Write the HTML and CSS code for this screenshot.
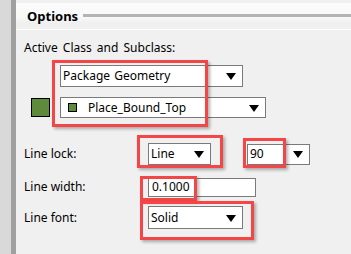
FILE: index.html
```html
<!DOCTYPE html>
<html lang="en">
<head>
    <meta charset="UTF-8">
    <title>Options</title>
    <link rel="stylesheet" href="styles.css">
</head>
<body>
    <div class="frame">
        <div class="strip"></div>
        <div class="bar"></div>
        <div class="panel">
            <div class="head">
                <span class="head-title">Options</span>
                <span class="head-line"></span>
            </div>
            <div class="body">
                <div class="caption">Active Class and Subclass:</div>
                <div class="combo combo-class">
                    <span class="combo-text">Package Geometry</span>
                    <span class="arrow"></span>
                </div>
                <div class="sub-row">
                    <span class="swatch"></span>
                    <div class="combo combo-sub">
                        <span class="mini-swatch"></span>
                        <span class="combo-text">Place_Bound_Top</span>
                        <span class="arrow"></span>
                    </div>
                </div>
                <div class="field-row row-lock">
                    <span class="label">Line lock:</span>
                    <div class="combo combo-lock">
                        <span class="combo-text">Line</span>
                        <span class="arrow"></span>
                    </div>
                    <div class="combo combo-angle">
                        <span class="combo-text">90</span>
                        <span class="arrow"></span>
                    </div>
                </div>
                <div class="field-row row-width">
                    <span class="label">Line width:</span>
                    <div class="edit">0.1000</div>
                </div>
                <div class="field-row row-font">
                    <span class="label">Line font:</span>
                    <div class="combo combo-font">
                        <span class="combo-text">Solid</span>
                        <span class="arrow"></span>
                    </div>
                </div>
            </div>
        </div>

        <div class="mark mark-class"></div>
        <div class="mark mark-lock"></div>
        <div class="mark mark-angle"></div>
        <div class="mark mark-width"></div>
        <div class="mark mark-font"></div>
    </div>
</body>
</html>
```

FILE: styles.css
```css
*{
    padding: 0;
    margin: 0;
    box-sizing: border-box;
}
body{
    background: #f0f0f0;
    font-family: "Noto Sans", "Open Sans", sans-serif;
    font-size: 12px;
    color: #000;
}
.frame{
    position: relative;
    display: flex;
    width: 351px;
    height: 254px;
    overflow: hidden;
}
.strip{
    width: 11px;
    background: #d9d9d9;
}
.bar{
    width: 5px;
    background: #a0a0a0;
}
.panel{
    flex: 1;
    background: #f0f0f0;
}
.head{
    height: 30px;
    padding-top: 3px;
    background: linear-gradient(#fcfcfc 0, #f8f8f8 14px, #f0f0f0 20px, #f0f0f0 100%);
    border-top: 3px solid #f0f0f0;
    border-bottom: 1px solid #ffffff;
    display: flex;
    align-items: flex-start;
}
.head-title{
    font-weight: bold;
    font-size: 13px;
    line-height: 16px;
    margin-left: 11px;
    margin-top: 2px;
    color: #000;
}
.head-line{
    flex: 1;
    height: 3px;
    margin-left: 5px;
    margin-top: 8px;
    background: #b4b4b4;
}
.body{
    padding-left: 8px;
}
.caption{
    margin-top: 10px;
    line-height: 16px;
    word-spacing: 2px;
}
.combo{
    position: relative;
    display: flex;
    align-items: center;
    background: #fff;
    border: 1px solid #7a7a7a;
}
.combo-text{
    padding-left: 2px;
    line-height: 16px;
    white-space: nowrap;
}
.arrow{
    position: absolute;
    right: 6px;
    top: 50%;
    margin-top: -3px;
    width: 0;
    height: 0;
    border-left: 5px solid transparent;
    border-right: 5px solid transparent;
    border-top: 7px solid #000;
}
.combo-class{
    margin-left: 36px;
    margin-top: 9px;
    width: 183px;
    height: 22px;
}
.combo-class .combo-text{
    word-spacing: 1px;
}
.sub-row{
    display: flex;
    align-items: center;
    margin-top: 10px;
    height: 21px;
}
.swatch{
    width: 19px;
    height: 19px;
    margin-left: 7px;
    background: #5e8a3c;
    border: 1px solid #000;
}
.combo-sub{
    margin-left: 10px;
    width: 206px;
    height: 21px;
}
.mini-swatch{
    width: 9px;
    height: 9px;
    margin-left: 7px;
    margin-right: 11px;
    background: #5e8a3c;
    border: 1px solid #000;
}
.combo-sub .combo-text{
    padding-left: 0;
}
.field-row{
    display: flex;
    align-items: center;
}
.label{
    width: 124px;
    line-height: 16px;
}
.row-lock{
    margin-top: 25px;
    height: 22px;
}
.combo-lock{
    width: 63px;
    height: 22px;
}
.combo-angle{
    margin-left: 36px;
    width: 63px;
    height: 21px;
}
.row-width{
    margin-top: 13px;
    height: 18px;
}
.edit{
    width: 108px;
    height: 19px;
    background: #fff;
    border: 1px solid #7a7a7a;
    padding-left: 3px;
    line-height: 16px;
}
.row-font{
    margin-top: 10px;
    height: 23px;
}
.combo-font{
    width: 95px;
    height: 23px;
}
.mark{
    position: absolute;
    border: 3px solid #f44646;
    box-shadow: 2px 2px 3px rgba(0, 0, 0, 0.3);
}
.mark-class{
    left: 52px;
    top: 60px;
    width: 156px;
    height: 67px;
}
.mark-lock{
    left: 137px;
    top: 135px;
    width: 86px;
    height: 33px;
}
.mark-angle{
    left: 243px;
    top: 138px;
    width: 43px;
    height: 30px;
}
.mark-width{
    left: 140px;
    top: 176px;
    width: 57px;
    height: 25px;
}
.mark-font{
    left: 140px;
    top: 201px;
    width: 114px;
    height: 39px;
}
```
